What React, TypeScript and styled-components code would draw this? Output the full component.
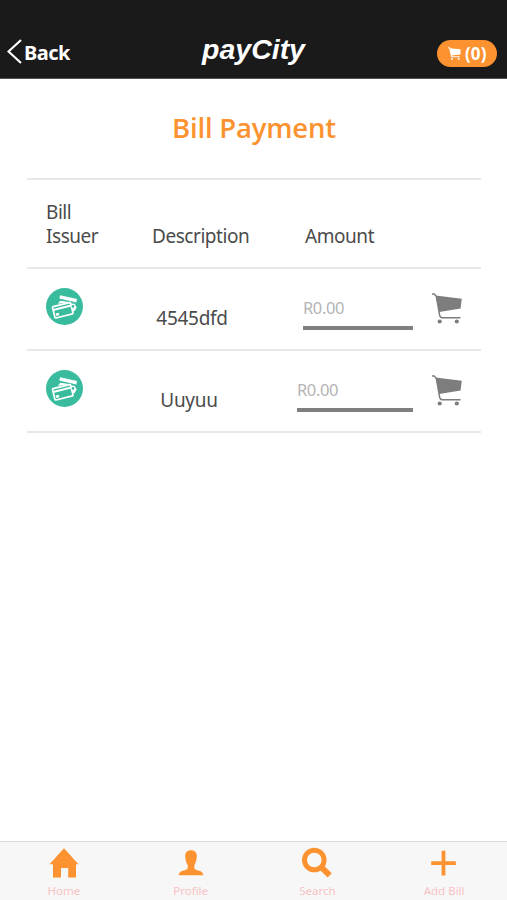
import React from "react";
import styled, { createGlobalStyle } from "styled-components";

const ORANGE = "#fd9330";

const GlobalStyle = createGlobalStyle`
  *, *::before, *::after { box-sizing: border-box; }
  body { margin: 0; background: #fff; font-family: "Noto Sans", "Open Sans", sans-serif; color: #4b4b4b; }
  svg { display: block; flex: none; }
`;

const Screen = styled.div`
  display: flex;
  flex-direction: column;
  height: 900px;
  width: 507px;
  background: #fff;
  overflow: hidden;
`;

const Header = styled.header`
  display: grid;
  grid-template-columns: 1fr auto 1fr;
  align-items: start;
  height: 79px;
  flex: none;
  background: #1a1a1a;
  border-bottom: 1px solid #555;
  color: #fff;
`;

const BackButton = styled.div`
  display: flex;
  align-items: center;
  gap: 2px;
  padding: 38px 0 0 7px;
  height: 65px;
  font-weight: 700;
  font-size: 20px;
  letter-spacing: -0.5px;
`;

const BackLabel = styled.span`
  line-height: 26px;
  padding-top: 2px;
`;

const Brand = styled.div`
  padding-top: 33px;
  font: italic 700 28.5px/33px "Liberation Sans", Arial, sans-serif;
`;

const CartBadge = styled.div`
  justify-self: end;
  display: flex;
  align-items: center;
  gap: 4px;
  width: 60px;
  height: 27px;
  margin: 40px 10px 0 0;
  padding-left: 11px;
  border-radius: 14px;
  background: ${ORANGE};
  font-weight: 700;
  font-size: 17px;
  letter-spacing: 0.1px;
`;

const Content = styled.main`
  flex: 1;
  padding: 0 26px 0 27px;
`;

const Title = styled.h1`
  margin: 0;
  height: 99px;
  padding-top: 30px;
  text-align: center;
  font-family: "Open Sans", "Noto Sans", sans-serif;
  font-size: 27.5px;
  line-height: 38px;
  font-weight: 600;
  letter-spacing: -0.2px;
  color: ${ORANGE};
`;

const HeadRow = styled.div`
  display: grid;
  grid-template-columns: 106px 153px 1fr;
  align-items: end;
  height: 89px;
  padding: 0 0 18.5px 19px;
  border-top: 2px solid #e8e8e8;
  font-size: 19px;
  line-height: 24.5px;
  letter-spacing: -0.45px;
`;

const Row = styled.div<{ $amountWidth: number }>`
  display: grid;
  grid-template-columns: 92px ${(p) => 218 - p.$amountWidth}px 1fr 68px;
  height: 82px;
  padding-left: 19px;
  border-top: 2px solid #e8e8e8;
`;

const Rows = styled.div`
  border-bottom: 2px solid #e8e8e8;
`;

const Issuer = styled.div`
  padding-top: 19px;
`;

const Description = styled.div`
  padding-top: 37px;
  text-align: center;
  font-size: 19px;
  line-height: 25px;
  letter-spacing: -0.3px;
`;

const AmountCell = styled.div`
  display: flex;
  justify-content: flex-end;
`;

const Amount = styled.div<{ $width: number }>`
  width: ${(p) => p.$width}px;
  height: 61px;
  padding-top: 28px;
  border-bottom: 4px solid #7f7f7f;
  font-size: 16.5px;
  line-height: 22px;
  letter-spacing: -0.4px;
  color: #b4b4b4;
`;

const CartCell = styled.div`
  display: flex;
  justify-content: flex-end;
  padding: 24px 19px 0 0;
`;

const TabBar = styled.nav`
  display: grid;
  grid-template-columns: repeat(4, 1fr);
  height: 59px;
  flex: none;
  background: #f7f7f7;
  border-top: 1px solid #dcdcdc;
`;

const Tab = styled.div`
  display: flex;
  flex-direction: column;
  align-items: center;
  padding: 5px 0 0 1px;
  font-size: 11.5px;
  line-height: 16px;
  color: #f8c3c4;
`;

const TabLabel = styled.span`
  margin-top: 5px;
`;

const CartIcon = ({ color }: { color: string }) => (
  <svg width="30" height="31" viewBox="0 0 30 31" fill="none">
    <path d="M3.6 2.6 29.8 5.7 28.6 15.4 7.2 18.9Z" fill={color} />
    <path d="M0 1.1H2.2L4.4 3.6 7.6 22.2Q8.2 24.7 10.6 24.7H28.5" stroke={color} strokeWidth="1.5" />
    <circle cx="7.7" cy="28.5" r="2.1" fill={color} />
    <circle cx="24.8" cy="28.5" r="2.1" fill={color} />
  </svg>
);

const BadgeCartIcon = () => (
  <svg width="13" height="13" viewBox="0 0 13 13" fill="none">
    <path d="M2 1.3 12.5 2.2V7.4L3.4 8.4Z" fill="#fff" />
    <path d="M0 .8H1.6L3.6 9.8H11.8" stroke="#fff" strokeWidth="1.1" />
    <circle cx="4" cy="12" r="1" fill="#fff" />
    <circle cx="10.7" cy="12" r="1" fill="#fff" />
  </svg>
);

const CardsIcon = () => (
  <svg width="37" height="37" viewBox="0 0 37 37" fill="none">
    <circle cx="18.5" cy="18.5" r="18.5" fill="#39bb9d" />
    <path d="M14.2 7.2 31 10.9 30.4 14.4 13.3 10.5Z" fill="#fff" />
    <path d="M11.8 15.8 14.2 12.8 25 14.3Z" fill="#fff" />
    <path d="M23.5 15.4 28.7 15.8 30.5 19.2 29 22.8 25.5 24Z" fill="#fff" />
    <g transform="rotate(-14 17 22)">
      <rect x="7.4" y="16.4" width="18.6" height="11.6" rx="0.8" fill="#39bb9d" stroke="#fff" strokeWidth="1.7" />
      <path d="M7.4 19.7H26" stroke="#fff" strokeWidth="2" />
      <rect x="9" y="23.6" width="3.2" height="2.6" fill="#fff" />
    </g>
    <circle cx="27" cy="18.4" r="1.3" fill="#39bb9d" />
  </svg>
);

const HomeIcon = () => (
  <svg width="30" height="31" viewBox="0 0 30 31" fill={ORANGE}>
    <path d="M15 1.3 29.5 17.3H27V30.5H19.2V21H12V30.5H4V17.3H.5Z" />
  </svg>
);

const ProfileIcon = () => (
  <svg width="26" height="31" viewBox="0 0 26 31" fill={ORANGE}>
    <path d="M13 3.2C9.2 3.2 7 5.4 7.2 9 7.3 13.2 8.4 16.3 9.7 18.3V20.9C9.5 22.3 7.8 22.8 5.3 23.6 2.5 24.6 .8 25.6 .7 28.2H25.3C25.2 25.6 23.5 24.6 20.7 23.6 18.2 22.8 16.5 22.3 16.3 20.9V18.3C17.6 16.3 18.7 13.2 18.8 9 19 5.4 16.8 3.2 13 3.2Z" />
  </svg>
);

const SearchIcon = () => (
  <svg width="30" height="31" viewBox="0 0 30 31" fill="none" stroke={ORANGE}>
    <circle cx="12.3" cy="13" r="9.8" strokeWidth="5" />
    <path d="M19 19.8 27.7 28.3" strokeWidth="6" />
  </svg>
);

const PlusIcon = () => (
  <svg width="26" height="31" viewBox="0 0 26 31" fill="none" stroke={ORANGE} strokeWidth="3.8">
    <path d="M.2 16.2H24.8M12.5 3.8V28.5" />
  </svg>
);

const bills = [
  { description: "4545dfd", width: 110 },
  { description: "Uuyuu", width: 116 },
];

const tabs = [
  { label: "Home", Icon: HomeIcon },
  { label: "Profile", Icon: ProfileIcon },
  { label: "Search", Icon: SearchIcon },
  { label: "Add Bill", Icon: PlusIcon },
];

export default function App() {
  return (
    <Screen>
      <GlobalStyle />
      <Header>
        <BackButton>
          <svg width="15" height="25" viewBox="0 0 15 25" fill="none">
            <path d="M14 1 1.5 12.5 14 24" stroke="#fff" strokeWidth="2.2" />
          </svg>
          <BackLabel>Back</BackLabel>
        </BackButton>
        <Brand>payCity</Brand>
        <CartBadge>
          <BadgeCartIcon />
          (0)
        </CartBadge>
      </Header>
      <Content>
        <Title>Bill Payment</Title>
        <HeadRow>
          <span>Bill<br />Issuer</span>
          <span>Description</span>
          <span>Amount</span>
        </HeadRow>
        <Rows>
          {bills.map((bill) => (
            <Row key={bill.description} $amountWidth={bill.width}>
              <Issuer><CardsIcon /></Issuer>
              <Description>{bill.description}</Description>
              <AmountCell>
                <Amount $width={bill.width}>R0.00</Amount>
              </AmountCell>
              <CartCell><CartIcon color="#7d7d7d" /></CartCell>
            </Row>
          ))}
        </Rows>
      </Content>
      <TabBar>
        {tabs.map(({ label, Icon }) => (
          <Tab key={label}>
            <Icon />
            <TabLabel>{label}</TabLabel>
          </Tab>
        ))}
      </TabBar>
    </Screen>
  );
}
